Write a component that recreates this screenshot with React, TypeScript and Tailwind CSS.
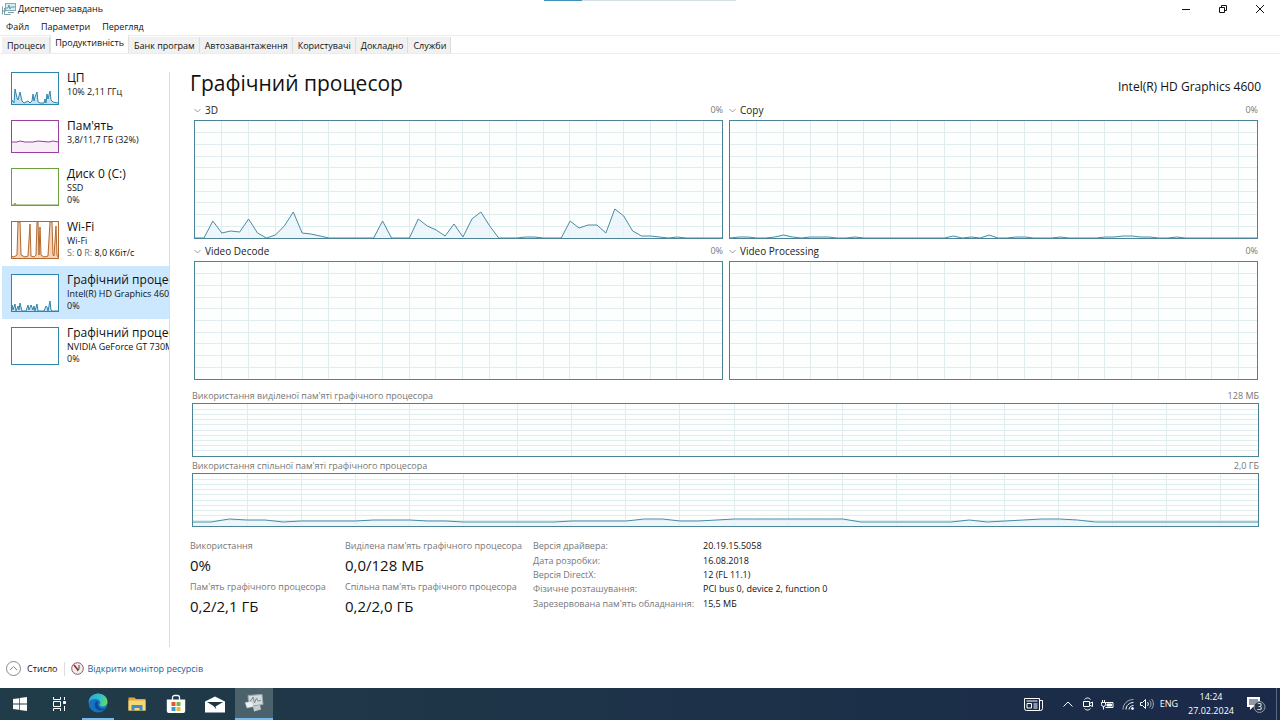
import React from 'react'

type Device = {
  name: string
  lines: React.ReactNode[]
  color: string
  fill: string
  points: string
  active?: boolean
}

const devices: Device[] = [
  {
    name: 'ЦП',
    lines: ['10% 2,11 ГГц'],
    color: '#2f86ad',
    fill: '#c3e1ef',
    points:
      '0,32 1,28 3,31 4,17 6,26 7,28 9,20 11,29 13,31 15,30 17,29 19,31 21,29 22,22 23,29 24,25 26,20 27,30 29,31 33,31 34,27 35,31 36,22 37,27 39,19 40,28 42,30 47,31',
  },
  {
    name: "Пам'ять",
    lines: ['3,8/11,7 ГБ (32%)'],
    color: '#9b3f9f',
    fill: '#f7eef8',
    points: '0,22 6,22 9,21 14,22 22,22 27,21 38,22 42,21 47,22',
  },
  {
    name: 'Диск 0 (C:)',
    lines: ['SSD', '0%'],
    color: '#6ba13a',
    fill: '#eff7e8',
    points: '0,37 3,37 4,35 5,37 47,37',
  },
  {
    name: 'Wi-Fi',
    lines: [
      'Wi-Fi',
      <>
        <span className="text-[#777777]">S:</span> 0 <span className="text-[#777777]">R:</span> 8,0 Кбіт/с
      </>,
    ],
    color: '#b3682c',
    fill: '#f3d5bd',
    points:
      '0,35 3,36 6,34 7,1 9,1 10,34 14,36 17,35 19,3 20,35 23,36 25,34 26,1 27,1 28,34 29,6 30,34 33,36 37,35 39,1 41,1 42,34 43,35 45,5 46,34 47,36',
  },
  {
    name: 'Графічний процесор 0',
    lines: ['Intel(R) HD Graphics 4600', '0%'],
    color: '#2f86ad',
    fill: '#c3e1ef',
    points:
      '0,37 1,31 2,36 4,30 5,37 7,32 8,36 9,29 11,37 15,37 17,31 18,36 20,31 22,36 23,32 24,37 26,30 27,37 33,37 35,32 36,33 37,37 39,27 40,36 41,37 47,37',
    active: true,
  },
  {
    name: 'Графічний процесор 1',
    lines: ['NVIDIA GeForce GT 730M', '0%'],
    color: '#2f86ad',
    fill: '#ffffff',
    points: '',
  },
]

const load3d = [
  0, 0, 17, 5, 7, 6, 19, 5, 0, 3, 12, 26, 5, 4, 2, 0, 0, 0, 0, 0, 0, 17, 0, 0, 0, 19, 12, 8, 2, 14, 1, 19, 26, 12, 0,
  0, 0, 1, 1, 0, 0, 0, 17, 10, 13, 13, 5, 29, 22, 7, 2, 2, 1, 0, 1, 0, 0, 0, 0, 0,
]
const loadCopy = [
  0, 1, 1, 0, 0, 1, 3, 1, 0, 1, 1, 1, 0, 0, 1, 0, 0, 0, 0, 0, 0, 0, 0, 0, 0, 2, 0, 1, 0, 3, 0, 0, 1, 1, 0, 0, 0, 1, 0,
  0, 0, 0, 1, 1, 2, 2, 1, 1, 0, 0, 1, 0, 0, 0, 0, 0, 0, 0, 0, 0,
]
const sharedMemory = [
  4, 4, 7, 6, 6, 4, 5, 5, 5, 5, 6, 6, 6, 5, 5, 4, 4, 4, 4, 4, 4, 5, 5, 5, 5, 7, 7, 5, 5, 6, 7, 7, 7, 7, 7, 7, 7, 4, 4,
  4, 4, 4, 4, 6, 4, 5, 6, 7, 7, 6, 4, 4, 4, 4, 4, 4, 4, 4, 4, 4,
]

const tabs = ['Процеси', 'Продуктивність', 'Банк програм', 'Автозавантаження', 'Користувачі', 'Докладно', 'Служби']

const details = [
  ['Версія драйвера:', '20.19.15.5058'],
  ['Дата розробки:', '16.08.2018'],
  ['Версія DirectX:', '12 (FL 11.1)'],
  ['Фізичне розташування:', 'PCI bus 0, device 2, function 0'],
  ["Зарезервована пам'ять обладнання:", '15,5 МБ'],
]

function Chart({ data, height, className }: { data?: number[]; height: number; className: string }) {
  const width = 1000
  const line = data?.map((v, i) => `${(i * width) / (data.length - 1)},${height - v}`).join(' ')
  return (
    <svg
      className={`block w-full border border-[#4a8496] bg-[#fdffff] ${className}`}
      viewBox={`0 0 ${width} ${height}`}
      preserveAspectRatio="none"
    >
      <g stroke="#e0ecee" shapeRendering="crispEdges">
        {Array.from({ length: 9 }, (_, i) => (
          <line key={i} x1="0" x2={width} y1={((i + 1) * height) / 10} y2={((i + 1) * height) / 10} vectorEffect="non-scaling-stroke" />
        ))}
        {Array.from({ length: 19 }, (_, i) => (
          <line key={i} x1={(i + 1) * 50.8} x2={(i + 1) * 50.8} y1="0" y2={height} vectorEffect="non-scaling-stroke" />
        ))}
      </g>
      {line && (
        <>
          <polygon points={`0,${height} ${line} ${width},${height}`} fill="#e6f2f8" fillOpacity="0.7" />
          <polyline points={line} fill="none" stroke="#4a8ba3" vectorEffect="non-scaling-stroke" />
        </>
      )}
    </svg>
  )
}

function EngineChart({ title, data }: { title: string; data?: number[] }) {
  return (
    <section>
      <div className="flex h-[22px] items-center justify-between pt-0.5">
        <button className="flex items-center gap-1 text-[10px] text-[#222222]">
          <svg width="7" height="5" viewBox="0 0 7 5" fill="none" stroke="#999999">
            <path d="M.5 1 3.5 4l3-3" />
          </svg>
          {title}
        </button>
        <span className="text-[9px] text-[#777777]">0%</span>
      </div>
      <Chart data={data} height={117} className="h-[119px]" />
    </section>
  )
}

function MemoryChart({ title, max, data }: { title: string; max: string; data?: number[] }) {
  return (
    <section>
      <div className="flex h-4 items-center justify-between pt-0.5 text-[9px] text-[#777777]">
        <h3>{title}</h3>
        <span>{max}</span>
      </div>
      <Chart data={data} height={52} className="h-[54px]" />
    </section>
  )
}

function DeviceItem({ device }: { device: Device }) {
  const h = device.lines.length > 1 ? 37 : 32
  return (
    <button className={`flex w-full items-start gap-2 overflow-hidden pl-[9px] text-left ${h > 32 ? 'h-[53px]' : 'h-12'} ${device.active ? 'bg-[#cce8ff]' : ''}`}>
      <svg width="48" height={h + 1} viewBox={`0 0 48 ${h + 1}`} className="mt-2 shrink-0">
        <rect x=".5" y=".5" width="47" height={h} fill="#fff" />
        {device.points && (
          <>
            <polygon points={`0,${h} ${device.points} 47,${h}`} fill={device.fill} />
            <polyline points={device.points} fill="none" stroke={device.color} />
          </>
        )}
        <rect x=".5" y=".5" width="47" height={h} fill="none" stroke={device.color} />
      </svg>
      <span className="flex flex-col pt-1.5 leading-3 whitespace-nowrap">
        <span className="text-[12px] leading-4">{device.name}</span>
        {device.lines.map((line, i) => (
          <span key={i}>{line}</span>
        ))}
      </span>
    </button>
  )
}

function Stat({ label, value }: { label: string; value: string }) {
  return (
    <div className="h-[41px] whitespace-nowrap">
      <dt className="leading-[14px] text-[#777777]">{label}</dt>
      <dd className="text-[15px] leading-6">{value}</dd>
    </div>
  )
}

function AppIcon() {
  return (
    <svg width="14" height="12" viewBox="0 0 14 12" fill="none">
      <rect x="3.5" y=".5" width="10" height="7" fill="#d9edf2" stroke="#8ba8b0" />
      <path d="M4 5h2l1-3 1 4 1-2h4" stroke="#4aa3b8" />
      <path d="M.5 3.5v8M2.5 5v6.5h6M1 8h3M6 9.5h6" stroke="#7fa0a8" />
    </svg>
  )
}

function EdgeIcon() {
  return (
    <svg width="20" height="20" viewBox="0 0 20 20">
      <defs>
        <linearGradient id="edge-top" x1="0" x2="1" y1="0.3" y2="0.5">
          <stop offset="0" stopColor="#2aa8e0" />
          <stop offset="0.6" stopColor="#35c1c4" />
          <stop offset="1" stopColor="#62d866" />
        </linearGradient>
      </defs>
      <circle cx="10" cy="10" r="9.5" fill="#1673c4" />
      <path d="M.5 9.5C1 4 5 .5 10 .5c5.5 0 9.5 3.8 9.5 8.2 0 3-2.3 4.8-5 4.8-2 0-3-.8-3-1.5s.8-1 .8-2.4C12.300 7.500 10.200 6 7.500 6 4 6 1.200 7.800.5 9.500z" fill="url(#edge-top)" />
      <path d="M7.500 9c-2 3-.2 8.500 5 8.500 2.500 0 4.500-1.200 5.300-2.200-1.500.7-6.800 1.400-8-3.300-.3-1.300.2-2.500.8-3-.9-.9-2.400-.8-3.100 0z" fill="#124a8f" />
    </svg>
  )
}

function FolderIcon() {
  return (
    <svg width="18" height="16" viewBox="0 0 18 16">
      <path d="M.5 1.500h6l1.500 1.500h9.500v11.500H.5z" fill="#e3a93b" />
      <path d="M.5 4.500h17v10H.5z" fill="#f8d775" />
      <path d="M3.500 14.500V9h11v5.500h-3V12h-5v2.500z" fill="#3f8ccd" />
    </svg>
  )
}

function StoreIcon() {
  return (
    <svg width="20" height="20" viewBox="0 0 20 20">
      <path d="M6.500 6V3.500a2 2 0 0 1 2-2h3a2 2 0 0 1 2 2V6" fill="none" stroke="#fff" strokeWidth="1.3" />
      <path d="M.8 5.500h18.400V17a2 2 0 0 1-2 2H2.800a2 2 0 0 1-2-2z" fill="#fff" />
      <path d="M5.500 8h4v4h-4z" fill="#e8552f" />
      <path d="M10.500 8h4v4h-4z" fill="#7db73a" />
      <path d="M5.500 13h4v4h-4z" fill="#2f9fdc" />
      <path d="M10.500 13h4v4h-4z" fill="#f3b72c" />
    </svg>
  )
}

function MailIcon() {
  return (
    <svg width="20" height="17" viewBox="0 0 20 17">
      <path d="M0 5.500 10 .5l10 5v11H0z" fill="#fff" />
      <path d="M2 6h16l-7.500 4.500.8 2.800L8.500 10z" fill="#1f3440" />
    </svg>
  )
}

function MonitorIcon() {
  return (
    <svg width="20" height="18" viewBox="0 0 20 18" fill="none">
      <path d="m4 1.500 14-1 1 10-14 2z" fill="#d5dcdf" stroke="#9aa7ab" />
      <path d="m5.500 7 2-1 1.500-3 1.500 6 2-5 1.500 3 3-.5" stroke="#7b8b90" />
      <path d="M1 8.500 8 7.500l2 5-7 1.500z" fill="#eef1f2" stroke="#aab4b8" strokeWidth=".5" />
      <path d="m9 12.500 7-1.500 1 4.500-7 2z" fill="#c3ccd0" />
    </svg>
  )
}

function Taskbar() {
  const item = 'flex h-8 w-[38px] items-center justify-center'
  return (
    <footer className="flex h-8 shrink-0 items-center justify-between bg-linear-to-r from-[#213c48] to-[#1a2948] text-white">
      <nav className="flex h-full items-center gap-px pl-px">
        <button aria-label="Пуск" className={item}>
          <svg width="14" height="14" viewBox="0 0 14 14" fill="#fff">
            <path d="M0 2 6 1.200v5.400H0zM6.700 1.100 14 0v6.600H6.700zM0 7.400h6v5.400L0 12zM6.700 7.400H14V14l-7.300-1.100z" />
          </svg>
        </button>
        <button aria-label="Подання завдань" className={item}>
          <svg width="14" height="14" viewBox="0 0 14 14" fill="none" stroke="#fff">
            <path d="M1.500 0v2.500h7V0M1.500 14v-2.500h7V14M1.500 4.500h7v5h-7zM12.500 0v3M12.500 9v5" />
            <path d="M11.500 4.500h2v2h-2z" fill="#fff" />
          </svg>
        </button>
        <button aria-label="Edge" className={item}>
          <span className="flex h-8 w-8 items-center justify-center border-b-2 border-[#76b9ed]">
            <EdgeIcon />
          </span>
        </button>
        <button aria-label="Провідник" className={item}>
          <FolderIcon />
        </button>
        <button aria-label="Store" className={item}>
          <StoreIcon />
        </button>
        <button aria-label="Пошта" className={item}>
          <MailIcon />
        </button>
        <button aria-label="Диспетчер завдань" className={`${item} border-b-2 border-[#76b9ed] bg-[#4b626d]`}>
          <MonitorIcon />
        </button>
      </nav>
      <div className="flex h-full items-center">
        <svg width="19" height="13" viewBox="0 0 19 13" fill="none" stroke="#fff" className="mr-5">
          <path d="M.5.5h15v12H2.500a2 2 0 0 1-2-2zM15.500 2.500h3v8a2 2 0 0 1-2 2h-1M2.500 3h11M9.500 6h4M9.500 8h4M9.500 10h4" />
          <path d="M3 5.500h4.500V10H3z" />
        </svg>
        <svg width="10" height="6" viewBox="0 0 10 6" fill="none" stroke="#fff" className="mr-2.5">
          <path d="m.5 5.500 4.500-4.500 4.500 4.500" />
        </svg>
        <svg width="10" height="14" viewBox="0 0 10 14" fill="none" stroke="#fff" className="mr-2">
          <path d="M.5 4.500h6v5h-6zM6.500 6.500l3-1.500v4.500l-3-1.500M1.500 2.500c1.500-2 4.500-2 6 0M1.500 11.500c1.500 2 4.500 2 6 0" />
        </svg>
        <svg width="13" height="11" viewBox="0 0 13 11" fill="none" stroke="#fff" className="mr-2">
          <path d="M4.500 3.500h7.500v5H4.500M1.500 1v2M3.500 1v2M.5 3.500h4v2a2 2 0 0 1-4 0zM2.500 7.500v3" />
          <path d="M6 5h4.500v2H6z" fill="#fff" />
        </svg>
        <svg width="12" height="12" viewBox="0 0 12 12" fill="none" stroke="#fff" className="mr-1.5">
          <path d="M1 11.500C1 6 5.500 1.500 11.500 1.500" opacity=".6" />
          <path d="M4 11.500c0-4 3.500-7 7.500-7M7 11.500c0-2 2-4 4.500-4" />
          <circle cx="10.500" cy="10.500" r="1" fill="#fff" />
        </svg>
        <svg width="14" height="12" viewBox="0 0 14 12" fill="none" stroke="#fff" className="mr-1.5">
          <path d="M.5 4.500h2l3-3v9l-3-3h-2zM7.500 4c1 1.200 1 2.800 0 4" />
          <path d="M9.500 2.500c2 2 2 5 0 7M11.500 1c2.500 3 2.500 7 0 10" opacity=".6" />
        </svg>
        <span className="mr-2.5">ENG</span>
        <time className="mr-3 w-[46px] text-center leading-[14px]">
          14:24
          <br />
          27.02.2024
        </time>
        <button aria-label="Сповіщення" className="relative mr-2.5 h-[18px] w-5">
          <svg width="20" height="18" viewBox="0 0 20 18">
            <path d="M1 2h13v10H7l-3 3v-3H1z" fill="#fff" />
            <path d="M3 5h9M3 7h9M3 9h6" stroke="#24324c" />
            <circle cx="13.500" cy="12" r="5.500" fill="#2c3647" stroke="#8c97a8" />
          </svg>
          <span className="absolute top-[6px] left-[11px] leading-3">3</span>
        </button>
        <span className="mr-[3px] h-full w-px bg-[#5c6880]" />
      </div>
    </footer>
  )
}

function App(): React.ReactElement {
  return (
    <div className="relative flex min-h-screen flex-col bg-white font-['Open_Sans','Noto_Sans',sans-serif] text-[9px] text-[#111111]">
      <div className="absolute top-0 left-[544px] flex h-px w-48 bg-[#d5e0e4]">
        <span className="w-[38px] bg-[#3d93b5]" />
      </div>
      <header className="flex h-[18px] items-center justify-between pr-[15px] pl-0.5">
        <h1 className="flex items-center gap-0.5">
          <AppIcon />
          Диспетчер завдань
        </h1>
        <div className="flex items-center gap-[27px]">
          <button aria-label="Згорнути">
            <svg width="10" height="10" viewBox="0 0 10 10" stroke="#111">
              <path d="M1 5.500h8" />
            </svg>
          </button>
          <button aria-label="Відновити">
            <svg width="10" height="10" viewBox="0 0 10 10" fill="none" stroke="#111">
              <path d="M1.500 3.500h5v5h-5zM3.500 3.500v-2h5v5h-2" />
            </svg>
          </button>
          <button aria-label="Закрити">
            <svg width="10" height="10" viewBox="0 0 10 10" stroke="#111">
              <path d="m1 1 8 8M9 1 1 9" />
            </svg>
          </button>
        </div>
      </header>
      <nav className="flex h-[17px] items-center gap-3 pl-1.5">
        <button>Файл</button>
        <button>Параметри</button>
        <button>Перегляд</button>
      </nav>
      <div role="tablist" className="flex h-[19px] items-end border-t border-b border-[#ececec] pl-0.5">
        {tabs.map((tab, i) => (
          <button
            key={tab}
            role="tab"
            aria-selected={i === 1}
            className={
              i === 1
                ? 'h-[18px] border-x border-[#e2e2e2] bg-white px-1 pb-0.5 leading-[14px]'
                : 'h-4 border-r border-[#dddddd] bg-[#f1f1f1] pt-0.5 pr-1 pl-[5px] leading-[14px]'
            }
          >
            {tab}
          </button>
        ))}
      </div>
      <div className="flex flex-1">
        <aside className="mt-2.5 flex w-[170px] shrink-0 pl-0.5">
          <div className="h-[583px] min-w-0 flex-1 overflow-hidden">
            {devices.map((device) => (
              <DeviceItem key={device.name} device={device} />
            ))}
          </div>
          <span className="mt-2 h-[575px] w-px bg-[#dddddd]" />
        </aside>
        <main className="min-w-0 flex-1 pt-4 pr-[19px] pl-5">
          <div className="flex h-7 items-center justify-between">
            <h2 className="text-[21px]">Графічний процесор</h2>
            <span className="pt-1.5 text-[12px]">Intel(R) HD Graphics 4600</span>
          </div>
          <div className="grid grid-cols-2 gap-x-1.5 pr-[3px] pl-1">
            <EngineChart title="3D" data={load3d} />
            <EngineChart title="Copy" data={loadCopy} />
            <EngineChart title="Video Decode" />
            <EngineChart title="Video Processing" />
          </div>
          <div className="pt-[7px] pr-0.5 pl-0.5">
            <MemoryChart title="Використання виділеної пам'яті графічного процесора" max="128 МБ" />
            <MemoryChart title="Використання спільної пам'яті графічного процесора" max="2,0 ГБ" data={sharedMemory} />
          </div>
          <div className="flex pt-3">
            <dl className="grid grid-cols-[155px_188px]">
              <Stat label="Використання" value="0%" />
              <Stat label="Виділена пам'ять графічного процесора" value="0,0/128 МБ" />
              <Stat label="Пам'ять графічного процесора" value="0,2/2,1 ГБ" />
              <Stat label="Спільна пам'ять графічного процесора" value="0,2/2,0 ГБ" />
            </dl>
            <table className="h-[72px] leading-[14px]">
              <tbody>
                {details.map(([label, value]) => (
                  <tr key={label}>
                    <th className="w-[170px] p-0 text-left font-normal whitespace-nowrap text-[#777777]">{label}</th>
                    <td className="p-0 whitespace-nowrap">{value}</td>
                  </tr>
                ))}
              </tbody>
            </table>
          </div>
        </main>
      </div>
      <div className="flex h-[39px] items-center gap-1.5 pl-1.5">
        <button className="flex items-center gap-1.5">
          <svg width="15" height="15" viewBox="0 0 15 15" fill="none" stroke="#888888">
            <circle cx="7.500" cy="7.500" r="7" />
            <path d="m4 9 3.500-3.500L11 9" />
          </svg>
          Стисло
        </button>
        <span className="h-3.5 w-px bg-[#dddddd]" />
        <a href="#resmon" className="flex items-center gap-1 text-[#1a6299]">
          <svg width="13" height="13" viewBox="0 0 13 13" fill="none">
            <circle cx="6.500" cy="6.500" r="5.800" fill="#f3eeee" stroke="#8a5a60" />
            <path d="M3 3l4 5" stroke="#a8202c" strokeWidth="1.6" />
            <path d="M8 3v4.500L6 9" stroke="#444" />
          </svg>
          Відкрити монітор ресурсів
        </a>
      </div>
      <Taskbar />
    </div>
  )
}

export default App
